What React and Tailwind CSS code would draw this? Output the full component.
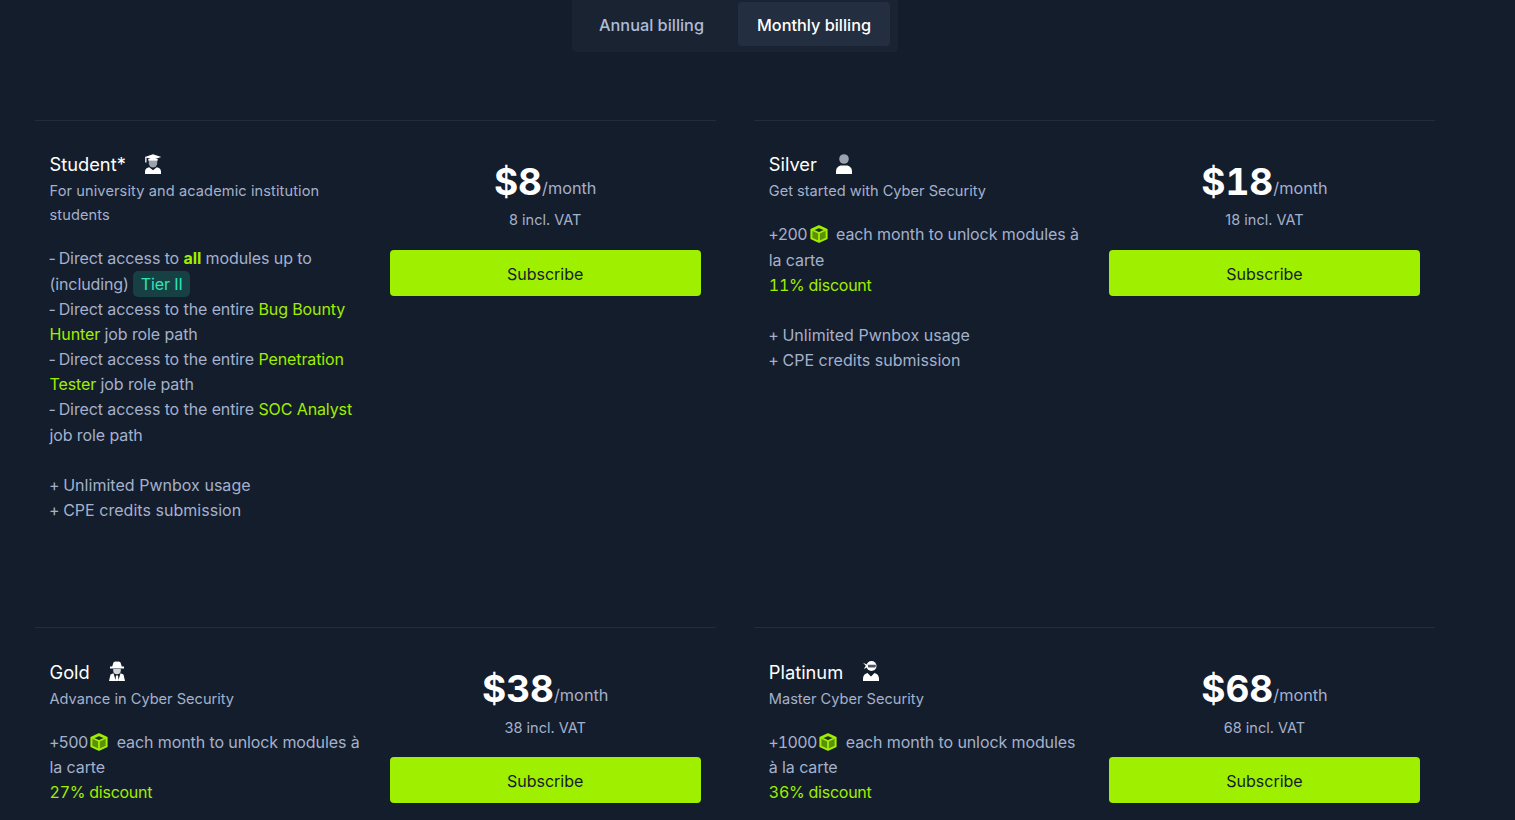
import React from 'react';

const Hl = ({ children }) => <span className="text-[#9fef00]">{children}</span>;

// the hyphen and plus sit tighter to the next word in the reference
const Dash = () => <span className="ml-[-1px] mr-[-1.5px]">-</span>;
const Plus = () => <span className="ml-[-0.5px] mr-[-1px]">+</span>;

function Cube() {
  return (
    <svg viewBox="0 0 18 18" className="inline-block w-[18px] h-[18px] align-[-3px] ml-[2.5px] mr-[4px]">
      <path d="M9 1.200 16.600 4.600V13.400L9 16.800 1.400 13.400V4.600Z" fill="#5d8f0b" stroke="#9fef00" strokeWidth="2" strokeLinejoin="round" />
      <path d="M2.500 5 9 8l6.500-3L9 2.200Z" fill="#22341a" stroke="#9fef00" strokeWidth="1.600" strokeLinejoin="round" />
      <path d="M9 8v8" stroke="#9fef00" strokeWidth="1.800" />
    </svg>
  );
}

function StudentIcon() {
  return (
    <svg viewBox="0.5 0 17 20" className="w-[18px] h-5">
      <path d="M4.800 6h8.400v3.200a4.200 4.200 0 0 1-8.400 0Z" fill="#9ca3af" />
      <path d="M.8 3 9 .3 17.200 3 9 5.700Z M1.200 3h1.300v5.500H1.200Z" fill="#fff" />
      <path d="M4.300 5h9.400v1.600H4.300Z" fill="#fff" />
      <path d="M1 20v-2.500C1 15 3 13.500 5.200 13.200L9 16.200l3.800-3c2.200.3 4.200 1.800 4.200 4.300V20Z" fill="#fff" />
    </svg>
  );
}

function SilverIcon() {
  return (
    <svg viewBox="0.5 0 17 20" className="w-[18px] h-5">
      <circle cx="9" cy="5" r="4.800" fill="#9ca3af" />
      <path d="M1 20v-2.500C1 14 3.500 11.500 6.500 11.500h5c3 0 5.500 2.500 5.500 6V20Z" fill="#fff" />
    </svg>
  );
}

function GoldIcon() {
  return (
    <svg viewBox="0.5 0 17 20" className="w-[18px] h-5">
      <path d="M5 3C5.500.6 7 .3 9 .8 11 .3 12.500.6 13 3l.8 2.500H16V7.500H2V5.500h2.200Z" fill="#fff" />
      <path d="M5.200 8h7.600v1.500a3.800 3.800 0 0 1-7.600 0Z" fill="#d1d5db" />
      <path d="M1 20l1.500-6.500 3-1.300L7.800 20Zm16 0-1.500-6.500-3-1.300L10.200 20ZM8 14.500h2l.6 5.500H7.400Z" fill="#fff" />
    </svg>
  );
}

function PlatinumIcon() {
  return (
    <svg viewBox="0.5 0 17 20" className="w-[18px] h-5">
      <circle cx="9.500" cy="5" r="5" fill="#fff" />
      <path d="M5.200 3.800h8.600v1.400a1.200 1.200 0 0 1-1.200 1.200H6.400Z" fill="#4b5563" />
      <path d="M1 1.800 6 4v2L1.800 8l2-3.200Z" fill="#fff" />
      <path d="M1 20v-2.500C1 14.500 3 12.500 5.500 12L9 15.500 12.500 12c2.500.5 4.500 2.500 4.500 5.500V20Z" fill="#fff" />
    </svg>
  );
}

const Tokens = ({ amount, tail, discount }) => (
  <>
    <p>
      <Plus /><span className="tabular-nums tracking-[-0.6px]">{amount}</span><Cube /> {tail}
    </p>
    <p className="tabular-nums tracking-[-0.25px]"><Hl>{discount}</Hl></p>
  </>
);

const PLANS = [
  {
    name: 'Student*',
    Icon: StudentIcon,
    desc: 'For university and academic institution students',
    descClass: 'tracking-[0.1px]',
    price: '8',
    body: (
      <>
        <p>
          <Dash /> Direct access to <strong className="font-bold text-[#9fef00]">all</strong> modules up to (including){' '}
          <span className="rounded-[5px] bg-[#164044] px-[7.5px] py-[3px] text-[#2ee7b6]">Tier II</span>
        </p>
        <p><Dash /> Direct access to the entire <Hl>Bug Bounty Hunter</Hl> job role path</p>
        <p><Dash /> Direct access to the entire <Hl>Penetration Tester</Hl> job role path</p>
        <p><Dash /> Direct access to the entire <Hl>SOC Analyst</Hl> job role path</p>
      </>
    ),
  },
  {
    name: 'Silver',
    Icon: SilverIcon,
    desc: 'Get started with Cyber Security',
    price: '18',
    body: <Tokens amount="200" tail="each month to unlock modules à la carte" discount="11% discount" />,
  },
  {
    name: 'Gold',
    Icon: GoldIcon,
    desc: 'Advance in Cyber Security',
    price: '38',
    body: <Tokens amount="500" tail="each month to unlock modules à la carte" discount="27% discount" />,
  },
  {
    name: 'Platinum',
    Icon: PlatinumIcon,
    desc: 'Master Cyber Security',
    price: '68',
    body: <Tokens amount="1000" tail="each month to unlock modules à la carte" discount="36% discount" />,
  },
];

function PlanCard({ plan }) {
  const { Icon } = plan;
  return (
    <div className="h-[507.4px] border-t border-[#222c3c] pl-[14.5px] pt-[29px] flex gap-[25.5px]">
      <div className="w-[314.7px] shrink-0 pt-[0.45px]">
        <div className="flex items-center h-[29px] text-[18.3px] text-white">
          {plan.name}
          <span className="ml-[18.4px] mb-[2px]"><Icon /></span>
        </div>
        <p className={`text-[14.6px] leading-6 text-[#a4b1cd] ${plan.descClass || ''}`}>{plan.desc}</p>
        <div className="mt-[19px] text-[16px] leading-[25.15px] tracking-[-0.1px] text-[#a4b1cd]">
          {plan.body}
          <div className="mt-[25px] tracking-[0.03px]">
            <p><Plus /> Unlimited Pwnbox usage</p>
            <p><Plus /> CPE credits submission</p>
          </div>
        </div>
      </div>
      <div className="w-[311px] shrink-0 flex flex-col items-center pt-[10px]">
        <div className="flex items-baseline h-[43px]">
          <span className="text-[37px] font-bold leading-[43px] tabular-nums text-white">${plan.price}</span>
          <span className="-translate-y-px text-[16.3px] text-[#a4b1cd]">/month</span>
        </div>
        <p className="mt-[5.3px] text-[14.5px] leading-6 text-[#a4b1cd]">{plan.price} incl. VAT</p>
        <button className="mt-[17.7px] h-[46px] w-full rounded-[4px] bg-[#9fef00] pt-[2px] text-[16px] text-[#141d2b]">Subscribe</button>
      </div>
    </div>
  );
}

export default function App() {
  return (
    <div className="h-[820px] overflow-hidden bg-[#141d2b] font-['Inter',sans-serif]">
      <div className="flex w-[1470px] justify-center">
        <div className="flex h-[52px] w-[326px] items-start justify-between whitespace-nowrap rounded-b-[4px] bg-[#1a2332] px-[8px] pt-[2px] text-[16.3px] font-medium">
          <button className="h-[44px] w-[143px] rounded-[4px] pt-[2px] text-[#b0bcd4]">Annual billing</button>
          <button className="h-[44px] w-[152px] rounded-[4px] bg-[#232e40] pt-[2px] text-white">Monthly billing</button>
        </div>
      </div>
      <div className="mt-[68px] ml-[35px] grid w-[1400px] grid-cols-[680.7px_680.7px] gap-x-[38.6px]">
        {PLANS.map(plan => (
          <PlanCard key={plan.name} plan={plan} />
        ))}
      </div>
    </div>
  );
}
